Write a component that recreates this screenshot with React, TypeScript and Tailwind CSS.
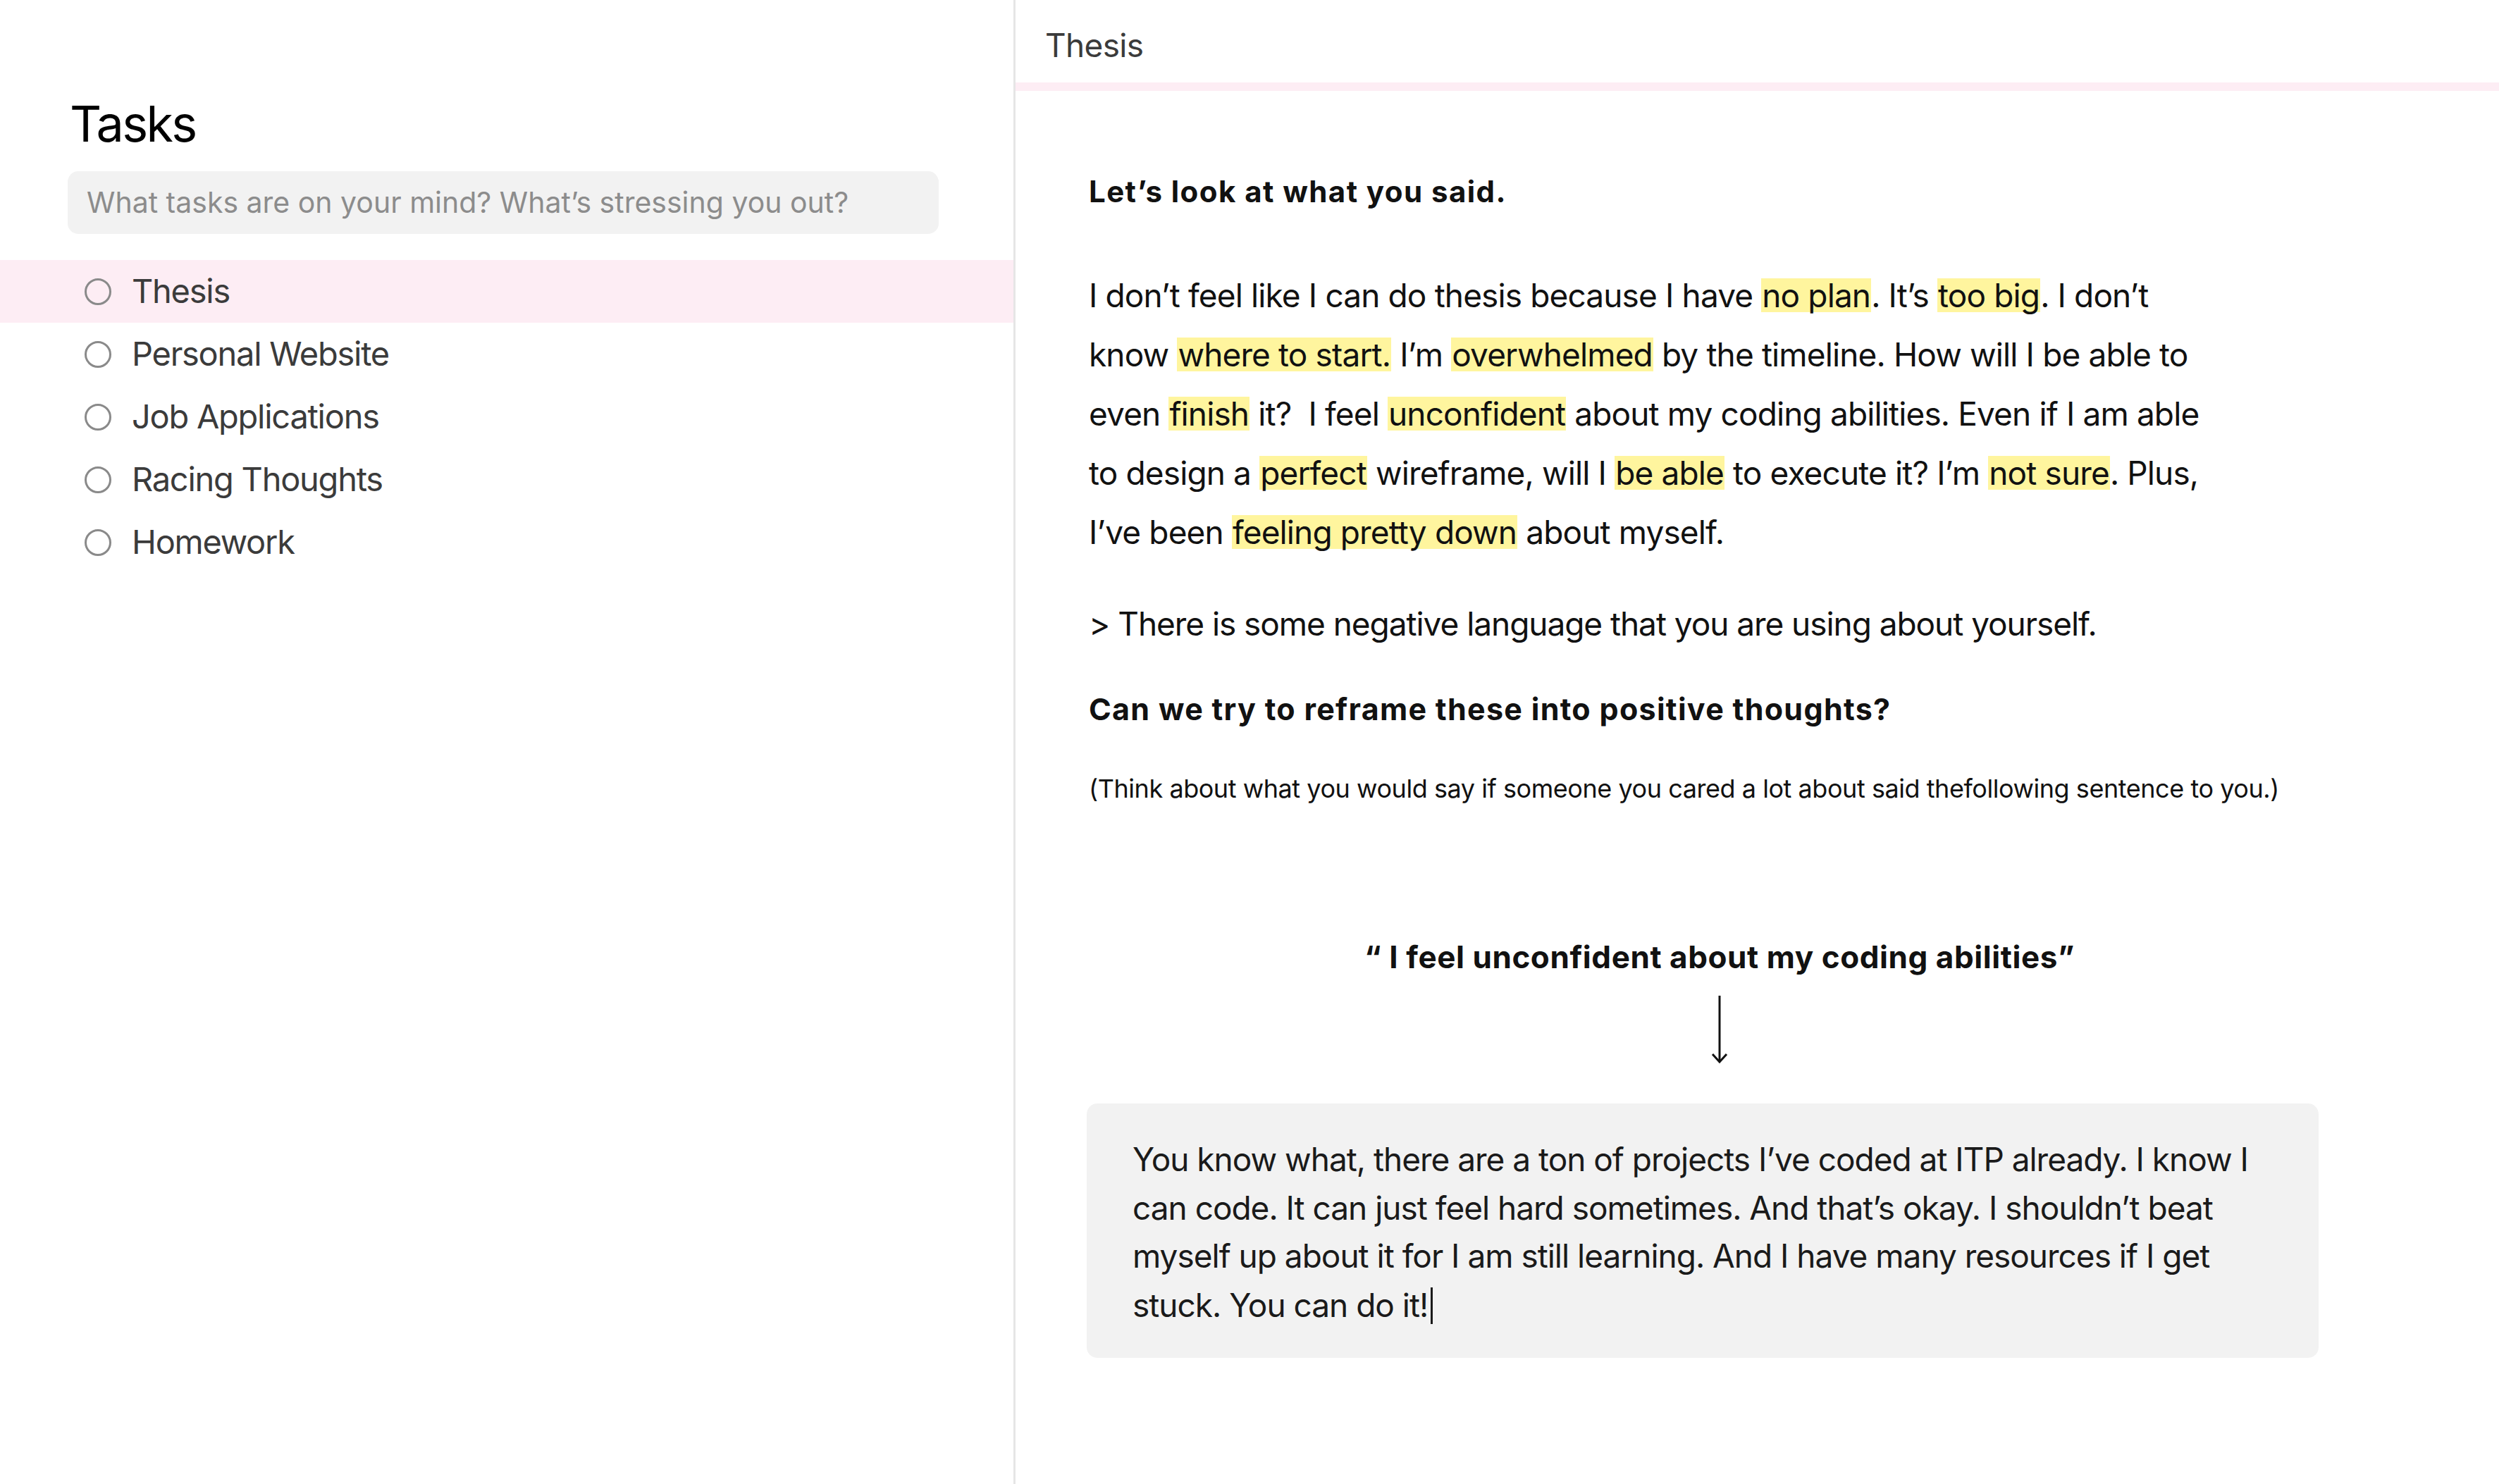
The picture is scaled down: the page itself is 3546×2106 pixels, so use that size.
const TASKS = ['Thesis', 'Personal Website', 'Job Applications', 'Racing Thoughts', 'Homework'];

type Seg = { t: string; hl?: boolean };

// what the user wrote, split at the words the app flagged
const SAID: Seg[][] = [
  [
    { t: 'I don’t feel like I can do thesis because I have ' },
    { t: 'no plan', hl: true },
    { t: '. It’s ' },
    { t: 'too big', hl: true },
    { t: '. I don’t' },
  ],
  [
    { t: 'know ' },
    { t: 'where to start.', hl: true },
    { t: ' I’m ' },
    { t: 'overwhelmed', hl: true },
    { t: ' by the timeline. How will I be able to' },
  ],
  [
    { t: 'even ' },
    { t: 'finish', hl: true },
    { t: ' it?\u00a0 I feel ' },
    { t: 'unconfident', hl: true },
    { t: ' about my coding abilities. Even if I am able' },
  ],
  [
    { t: 'to design a ' },
    { t: 'perfect', hl: true },
    { t: ' wireframe, will I ' },
    { t: 'be able', hl: true },
    { t: ' to execute it? I’m ' },
    { t: 'not sure', hl: true },
    { t: '. Plus,' },
  ],
  [{ t: 'I’ve been ' }, { t: 'feeling pretty down', hl: true }, { t: ' about myself.' }],
];

const REFRAME = [
  'You know what, there are a ton of projects I’ve coded at ITP already. I know I',
  'can code. It can just feel hard sometimes. And that’s okay. I shouldn’t beat',
  'myself up about it for I am still learning. And I have many resources if I get',
  'stuck. You can do it!',
];

function DownArrow() {
  return (
    <svg width="24" height="96" viewBox="0 0 24 96" fill="none" stroke="#111" strokeWidth="3">
      <line x1="12" y1="0" x2="12" y2="94" />
      <polyline points="2,83 12,94 22,83" strokeLinejoin="miter" />
    </svg>
  );
}

export default function App() {
  return (
    <div className="flex h-[2106px] w-[3546px] bg-white font-[Inter,'Noto_Sans',sans-serif]">
      <aside className="w-[1441px] shrink-0 border-r-[3px] border-[#e6e6e6]">
        <h1 className="pl-[99px] pt-[132px] text-[70px] leading-[88px] font-normal tracking-[-0.037em] text-black">Tasks</h1>
        <div className="ml-[96px] mt-[23px] flex h-[89px] w-[1236px] items-center rounded-[15px] bg-[#f2f2f2] pl-[27px] text-[41px] tracking-normal text-[#8c8c8c]">
          What tasks are on your mind? What’s stressing you out?
        </div>
        <ul className="mt-[37px]">
          {TASKS.map((task, i) => (
            <li
              key={task}
              className={
                i === 0
                  ? 'flex h-[89px] items-center bg-[#fdedf4]'
                  : 'flex h-[89px] items-center'
              }
            >
              <span className="ml-[120px] size-[38px] shrink-0 rounded-full border-[3px] border-[#8a8a8a]" />
              <span className="ml-[29px] text-[47px] tracking-[-0.027em] text-[#3b3b3b]">{task}</span>
            </li>
          ))}
        </ul>
      </aside>

      <main className="min-w-0 flex-1">
        <div className="h-[117px] pl-[42px] pt-[36px] text-[46px] leading-[56px] tracking-[-0.015em] text-[#3b3b3b]">Thesis</div>
        <div className="h-[12px] bg-[#fdedf4]" />

        <div className="pl-[104px] text-[#111]">
          <p className="mt-[117px] text-[42px] leading-[52px] font-bold tracking-[0.034em]">Let’s look at what you said.</p>

          <div className="mt-[79px] text-[46px] leading-[84px] tracking-[-0.019em]">
            {SAID.map((line, i) => (
              <div key={i} className="whitespace-pre">
                {line.map((seg, j) =>
                  seg.hl ? (
                    <span key={j} className="inline-block bg-[#fff59e] px-[1px] leading-[48px]">
                      {seg.t}
                    </span>
                  ) : (
                    <span key={j}>{seg.t}</span>
                  )
                )}
              </div>
            ))}
          </div>

          <p className="mt-[60px] text-[46px] leading-[56px] tracking-[-0.023em]">&gt; There is some negative language that you are using about yourself.</p>
          <p className="mt-[67px] text-[43px] leading-[52px] font-bold tracking-[0.03em]">Can we try to reframe these into positive thoughts?</p>
          <p className="mt-[65px] text-[36px] leading-[44px] tracking-[-0.0125em]">
            (Think about what you would say if someone you cared a lot about said thefollowing sentence to you.)
          </p>

          <div className="flex w-[1790px] flex-col items-center">
            <p className="mt-[190px] text-[44px] leading-[54px] font-bold tracking-[0.013em]">“ I feel unconfident about my coding abilities”</p>
            <div className="mt-[28px]">
              <DownArrow />
            </div>
          </div>

          <div className="-ml-[3px] mt-[57px] w-[1748px] rounded-[15px] bg-[#f2f2f2] pb-[41px] pl-[65px] pt-[45px] text-[46px] leading-[68.6px] tracking-[-0.022em] text-[#1a1a1a]">
            {REFRAME.map((line, i) => (
              <div key={i} className="whitespace-pre">
                {line}
                {i === REFRAME.length - 1 && (
                  <span className="ml-[4px] inline-block h-[52px] w-[3px] translate-y-[10px] bg-[#1a1a1a]" />
                )}
              </div>
            ))}
          </div>
        </div>
      </main>
    </div>
  );
}
